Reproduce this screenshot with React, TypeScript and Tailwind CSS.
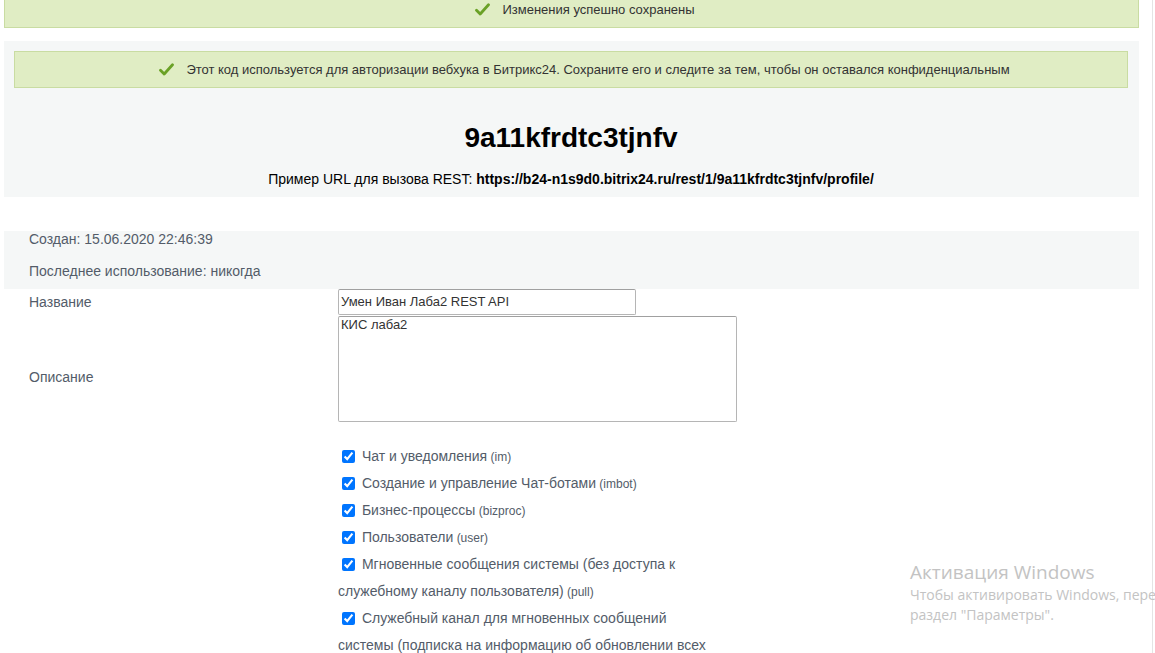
import React from "react";

const Check = () => (
  <svg width="15" height="13" viewBox="0 0 15 13" className="shrink-0">
    <path d="M1.5 7.2 L5.2 11 L13.5 1.8" fill="none" stroke="#6aa126" strokeWidth="2.8" strokeLinecap="round" strokeLinejoin="round" />
  </svg>
);

const perms: { t: string; c: string }[] = [
  { t: "Чат и уведомления", c: "(im)" },
  { t: "Создание и управление Чат-ботами", c: "(imbot)" },
  { t: "Бизнес-процессы", c: "(bizproc)" },
  { t: "Пользователи", c: "(user)" },
  { t: "Мгновенные сообщения системы (без доступа к служебному каналу пользователя)", c: "(pull)" },
  { t: "Служебный канал для мгновенных сообщений системы (подписка на информацию об обновлении всех", c: "" },
];

export default function App() {
  return (
    <div className="relative w-[1155px] h-[653px] overflow-hidden bg-white font-['Liberation_Sans',Arial,sans-serif]">
      <div className="w-[1153px] h-full border-r border-[#e4e4e4]">
        <div className="pl-[4px] pr-[13px]">
          {/* top banner */}
          <div className="h-[28px] bg-[#e0edc4] border border-t-0 border-[#c9dca2] flex items-start justify-center pt-[3px] gap-[12px] pl-[27px]">
            <Check />
            <span className="text-[13px] leading-[14px] text-[#333]">Изменения успешно сохранены</span>
          </div>

          {/* gray panel */}
          <div className="mt-[13px] bg-[#f5f7f7] pt-[10px] pb-[10px] pl-[10px] pr-[11px] h-[156px]">
            <div className="h-[37px] bg-[#e0edc4] border border-[#c9dca2] flex items-center justify-center gap-[12px] pl-[27px]">
              <Check />
              <span className="text-[13px] text-[#333]">
                Этот код используется для авторизации вебхука в Битрикс24. Сохраните его и следите за тем, чтобы он оставался конфиденциальным
              </span>
            </div>
            <div className="mt-[34px] text-center text-[28px] leading-[32px] font-bold text-black">9a11kfrdtc3tjnfv</div>
            <div className="mt-[17px] text-center text-[14px] leading-[16px] text-black">
              Пример URL для вызова REST: <b>https://b24-n1s9d0.bitrix24.ru/rest/1/9a11kfrdtc3tjnfv/profile/</b>
            </div>
          </div>

          {/* info block */}
          <div className="mt-[34px] bg-[#f5f7f7] h-[58px] pl-[25px] text-[14px] text-[#535c69]">
            <div className="leading-[16px]">Создан: 15.06.2020 22:46:39</div>
            <div className="leading-[16px] mt-[16px]">Последнее использование: никогда</div>
          </div>

          {/* form */}
          <div className="grid grid-cols-[309px_1fr] pl-[25px] text-[14px] text-[#535c69]">
            <div className="pt-[5px] leading-[16px]">Название</div>
            <div>
              <div className="w-[298px] h-[26px] border border-[#b5b5b5] border-t-[#a0a0a0] rounded-[2px] bg-white px-[2px] text-[13px] leading-[24px] text-[#333]">
                Умен Иван Лаба2 REST API
              </div>
            </div>
            <div className="pt-[54px] leading-[16px]">Описание</div>
            <div className="pt-[1px]">
              <div className="w-[399px] h-[106px] border border-[#b5b5b5] border-t-[#a0a0a0] rounded-[2px] bg-white px-[2px] text-[13px] leading-[16px] text-[#333]">
                КИС лаба2
              </div>
            </div>
            <div></div>
            <div className="pt-[21px] w-[377px] text-[14px] leading-[27px] text-[#535c69]">
              {perms.map((p, i) => (
                <div key={i}>
                  <input
                    type="checkbox"
                    checked
                    readOnly
                    className="w-[13px] h-[13px] m-[3px_3px_3px_4px] align-[-2px] accent-[#0075ff]"
                  />{" "}
                  {p.t}
                  {p.c && <span className="text-[12px] leading-[12px]"> {p.c}</span>}
                </div>
              ))}
            </div>
          </div>
        </div>
      </div>

      {/* windows watermark */}
      <div className="absolute left-[910px] top-[560px] text-[#c3c3c3] font-['Open_Sans',sans-serif] whitespace-nowrap">
        <div className="text-[19px] leading-[24px]">Активация Windows</div>
        <div className="text-[14px] leading-[20px] mt-[1px]">Чтобы активировать Windows, перейдите в</div>
        <div className="text-[14px] leading-[20px]">раздел "Параметры".</div>
      </div>
    </div>
  );
}
